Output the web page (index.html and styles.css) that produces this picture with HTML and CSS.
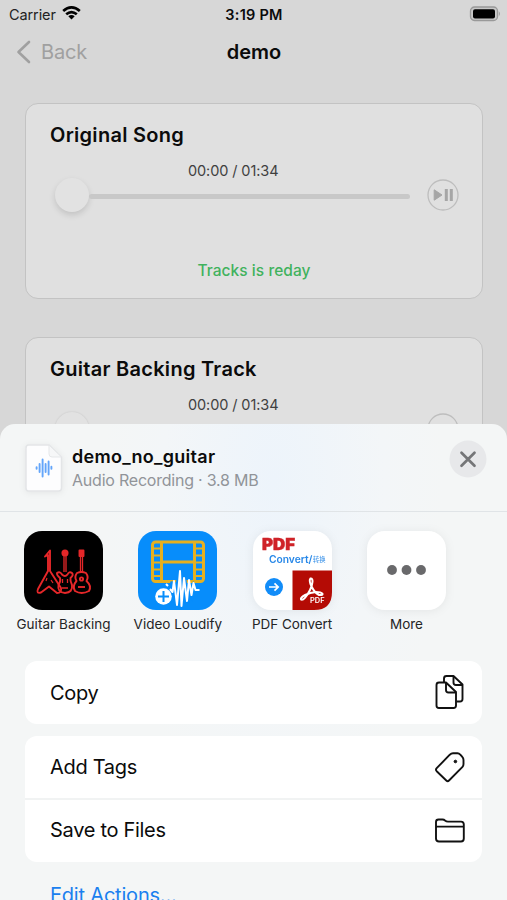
FILE: index.html
```html
<!DOCTYPE html>
<html lang="en">
<head>
<meta charset="utf-8">
<title>demo</title>
<link rel="stylesheet" href="styles.css">
</head>
<body>
<main class="screen">
  <header class="status">
    <div class="carrier"><span class="carrier-name">Carrier</span>
      <svg width="19" height="14" viewBox="0 0 19 14" fill="none" stroke="#000" stroke-width="2.7"><path d="M1.2 5Q9.500-2.200 17.800 5M4.200 8.300Q9.500 3.900 14.800 8.300"/><path d="M9.500 13.500L6.300 10.300Q9.500 7.700 12.700 10.300Z" fill="#000" stroke="none"/></svg>
    </div>
    <span class="time">3:19 PM</span>
    <svg class="battery" width="32" height="16" viewBox="0 0 32 16"><rect x="1.500" y="1" width="27" height="13.500" rx="4" fill="#c8c8c8" stroke="#999" stroke-width="1.300"/><rect x="4" y="3.200" width="22" height="9.200" rx="2" fill="#000"/><path d="M29.800 5.200Q32 7.700 29.800 10.200Z" fill="#999"/></svg>
  </header>
  <nav class="nav">
    <div class="back"><svg width="15" height="24" viewBox="0 0 15 24" fill="none" stroke="#a0a0a0" stroke-width="2.600" stroke-linecap="round" stroke-linejoin="round"><path d="M13 2L2.500 12L13 22"/></svg><span class="back-label">Back</span></div>
    <h1 class="title">demo</h1>
    <span></span>
  </nav>
  <section class="card">
    <h2 class="card-title"><span>Original Song</span></h2>
    <div class="clock">00:00 / 01:34</div>
    <div class="player">
      <div class="slider"><i class="thumb"></i><i class="rail"></i></div>
      <svg class="play" width="32" height="32" viewBox="0 0 32 32"><circle cx="16" cy="16" r="15" fill="none" stroke="#bdbdbd" stroke-width="1.300"/><path d="M7.200 10.800L15 16L7.200 21.200Z" fill="#a6a6a6" stroke="#a6a6a6" stroke-linejoin="round"/><path d="M19.300 10V22M24.300 10V22" stroke="#a6a6a6" stroke-width="3"/></svg>
    </div>
    <p class="ready"><span>Tracks is reday</span></p>
  </section>
  <section class="card">
    <h2 class="card-title"><span>Guitar Backing Track</span></h2>
    <div class="clock">00:00 / 01:34</div>
    <div class="player">
      <div class="slider"><i class="thumb flat"></i><i class="rail"></i></div>
      <svg class="play" width="32" height="32" viewBox="0 0 32 32"><circle cx="16" cy="16" r="15" fill="none" stroke="#bdbdbd" stroke-width="1.300"/></svg>
    </div>
  </section>
</main>
<aside class="sheet">
  <header class="file">
    <svg class="doc" width="40" height="50" viewBox="0 0 40 50"><path d="M4.500 2H25L37.500 14V45Q37.500 48 34.500 48H4.500Q2 48 2 45V5Q2 2 4.500 2Z" fill="#fdfdfe" stroke="#e3e5e7" stroke-width="1.500"/><path d="M25 2V11Q25 14 28 14H37.500Z" fill="#f6f7f8" stroke="#e5e7e9"/><path d="M12.600 24.200v1.500M15.600 21v8M18.600 16.500v17M21.600 21v8M24.600 18.500v13M27.400 23.800v2" stroke="#63a5fa" stroke-width="1.900" stroke-linecap="round"/></svg>
    <div class="file-info"><strong class="file-name">demo_no_guitar</strong><span class="file-meta">Audio Recording · 3.8 MB</span></div>
    <svg class="close" width="38" height="38" viewBox="0 0 38 38"><circle cx="19" cy="19" r="18.500" fill="#e7e8ea"/><path d="M12.500 12.800L25.500 25.800M25.500 12.800L12.500 25.800" stroke="#757678" stroke-width="2.700" stroke-linecap="round"/></svg>
  </header>
  <div class="apps">
    <div class="app">
      <svg class="icon" width="79" height="79" viewBox="0 0 79 79"><rect width="79" height="79" rx="18" fill="#000"/>
        <g fill="none" stroke="#e62729" stroke-width="1.900" stroke-linejoin="round">
          <path d="M24 40V24L21 25.500L26 19.500V40L37 57Q38 62 33 62L25 55.500L17 61.500Q12 63 14 58Z"/><path d="M23 47l-1 3M27 49l2 3" stroke-width="1.200"/>
          <path d="M40 25V41M42 25V41" stroke-width="1.300"/><circle cx="41" cy="22" r="2.600" fill="#e62729"/>
          <path d="M38 43.500Q36 40 33 42Q32.500 44 36 47Q37 50 34.500 54Q33 61.500 41 62Q49 61.500 48 54Q46 50 46.500 47Q50 44 48 42Q45 40 43.500 43.500Q41 46.500 38 43.500Z"/><path d="M38.500 48v4M43.500 48v4M38 57h6" stroke-width="1.300"/>
          <path d="M56.500 25V41M58.500 25V41" stroke-width="1.300"/><path d="M55.500 19.500H59.500V25H55.500Z" fill="#e62729"/>
          <path d="M53 42Q57.500 40 62 42Q65 46 62.500 50Q68 55 65 60Q57.500 64 51 60Q48 55 52.500 50Q50 46 53 42Z"/><circle cx="57.500" cy="48" r="1.600"/><path d="M54 56h7"/>
        </g></svg>
      <span class="n1">Guitar Backing</span>
    </div>
    <div class="app">
      <svg class="icon" width="79" height="79" viewBox="0 0 79 79"><rect width="79" height="79" rx="18" fill="#078dfb"/>
        <g fill="none" stroke="#e5b020" stroke-width="3"><rect x="14.500" y="11" width="51" height="39.500" rx="3"/><path d="M23.500 11V50M56.500 11V50M24 31H56"/><path d="M14 17.500h9M14 24.500h9M14 31.500h9M14 38.500h9M14 45h9M57 17.500h9M57 24.500h9M57 31.500h9M57 38.500h9M57 45h9" stroke-width="2.200"/></g>
        <path d="M30 55L33 57L35 51L38 71L42 40L43.500 74L46 49L49 71L51 55L54 63L56 56L58 59H61" fill="none" stroke="#078dfb" stroke-width="5"/>
        <path d="M28 53L30 55M32 58L34.500 61L36 50L39 74L42 40L43.500 75L46 47L49 70L51 49L53.500 64L55.500 52L57.500 59H61.500" fill="none" stroke="#fff" stroke-width="2" stroke-linejoin="round"/>
        <circle cx="25.500" cy="65.500" r="8.300" fill="#fff"/><path d="M20 65.500h11M25.500 60v11" stroke="#078dfb" stroke-width="2"/></svg>
      <span class="n2">Video Loudify</span>
    </div>
    <div class="app">
      <svg class="icon shadow" width="79" height="79" viewBox="0 0 79 79"><rect width="79" height="79" rx="18" fill="#fff"/>
        <path d="M39.500 39.500H79V61Q79 79 61 79H39.500Z" fill="#b40b05"/>
        <text class="pdf-big" x="9" y="18.700" textLength="33" lengthAdjust="spacingAndGlyphs">PDF</text>
        <text class="convert" x="16" y="31.500" textLength="43.500" lengthAdjust="spacingAndGlyphs">Convert/</text><text class="zhuan" x="60" y="31.300" textLength="12.500" lengthAdjust="spacingAndGlyphs">转换</text>
        <circle cx="21" cy="56" r="9" fill="#118cf8"/><path d="M16 56h9M21.500 52.300l3.700 3.700l-3.700 3.700" fill="none" stroke="#fff" stroke-width="1.700"/>
        <path d="M57.500 47.500C60.500 47 60 53 57 59C54 65 50 70 48 68.500C47 66 55 61.500 63 61C70 61 72 64.500 66 64C60 61 55 50 57.500 47.500Z" fill="none" stroke="#fff" stroke-width="2"/>
        <text class="pdf-small" x="57" y="72" textLength="14.500" lengthAdjust="spacingAndGlyphs">PDF</text></svg>
      <span class="n3">PDF Convert</span>
    </div>
    <div class="app">
      <svg class="icon shadow" width="79" height="79" viewBox="0 0 79 79"><rect width="79" height="79" rx="18" fill="#fff"/><g fill="#69696b"><circle cx="25" cy="39" r="4.900"/><circle cx="39.500" cy="39" r="4.900"/><circle cx="54" cy="39" r="4.900"/></g></svg>
      <span class="n4">More</span>
    </div>
  </div>
  <div class="group">
    <div class="row"><span class="r1">Copy</span>
      <svg width="32" height="36" viewBox="0 0 32 36" fill="none" stroke="#111" stroke-width="1.900" stroke-linejoin="round"><path d="M10 8V4.500Q10 2 12.500 2H19.500L28.500 10.500V25Q28.500 27.500 26 27.500H22.500"/><path d="M19.500 2.500V8.500Q19.500 11 22 11H28"/><path d="M5 8.500H12L22 18V31.500Q22 34 19.500 34H5Q2.500 34 2.500 31.500V11Q2.500 8.500 5 8.500Z"/><path d="M12 9V16Q12 18.500 14.500 18.500H21.500"/></svg></div>
  </div>
  <div class="group">
    <div class="row"><span class="r2">Add Tags</span>
      <svg width="32" height="34" viewBox="0 0 32 34" fill="none" stroke="#111" stroke-width="1.900" stroke-linejoin="round"><path d="M2.700 18.200L15.800 4.700Q17.300 3.300 19 3.300H23.500Q25 3.300 26.300 4.600L28.300 6.900Q29.500 8.200 29.500 10V14Q29.500 15.800 28.500 16.800L15 30.500Q13.700 31.800 12.300 30.500L2.700 21.200Q1.300 19.700 2.700 18.200Z"/><circle cx="21.400" cy="11.500" r="1.300" fill="#111" stroke-width="1"/></svg></div>
    <div class="row"><span class="r3">Save to Files</span>
      <svg width="32" height="28" viewBox="0 0 32 28" fill="none" stroke="#111" stroke-width="1.900" stroke-linejoin="round"><path d="M2 21.500V5Q2 2.500 4.500 2.500H8.500Q10 2.500 11 3.500Q12.300 4.600 14 4.600H27Q29.800 4.600 29.800 7.500V21.500Q29.800 24.500 27 24.500H5Q2 24.500 2 21.500ZM2 9.600H30"/></svg></div>
  </div>
  <div class="edit"><span>Edit Actions...</span></div>
</aside>
</body>
</html>
```
FILE: styles.css
```css
* { box-sizing: border-box; margin: 0; padding: 0; }
body { width: 507px; height: 900px; overflow: hidden; background: #d7d7d7; color: #0b0b0b; font-family: Inter, "Liberation Sans", sans-serif; display: grid; }
.screen, .sheet { grid-area: 1 / 1; }
svg { display: block; flex: none; }
span, strong { white-space: nowrap; }
.status { height: 28px; display: grid; grid-template-columns: 1fr auto 1fr; align-items: center; padding: 0 6px 0 9px; }
.carrier { display: flex; gap: 6px; align-items: center; font-size: 14.5px; letter-spacing: -.1px; color: #222; }
.carrier svg { margin-top: -2px; }
.time { font-size: 14.5px; letter-spacing: .25px; font-weight: 600; margin-left: -2px; }
.battery { justify-self: end; margin-top: -1px; }
.nav { height: 48px; display: grid; grid-template-columns: 1fr auto 1fr; align-items: center; padding: 0 16px; }
.back { display: flex; align-items: center; gap: 10px; font-size: 20px; letter-spacing: -.15px; color: #a0a0a0; }
.title { font-size: 20px; font-weight: 600; letter-spacing: .05px; padding-left: 1px; }
.card { margin: 27px 24px 38px 25px; height: 196px; border: 1.5px solid #c3c3c3; border-radius: 13px; background: #e0e0e0; padding: 18px 24px; }
.card + .card { margin-top: 0; }
.card-title { font-size: 20px; line-height: 26px; font-weight: 600; letter-spacing: .28px; }
.clock { margin: 13px 0 0 138px; font-size: 14.5px; line-height: 20px; letter-spacing: -.1px; color: #3f3f3f; white-space: nowrap; }
.player { display: flex; align-items: center; justify-content: space-between; height: 30px; margin-top: -1px; }
.slider { display: flex; align-items: center; width: 360px; padding-left: 5px; }
.thumb { width: 34px; height: 34px; border-radius: 50%; background: #e2e2e2; box-shadow: 0 3px 6px #0002; }
.flat { box-shadow: 0 0 2px #0002; }
.rail { flex: 1; height: 5px; border-radius: 3px; background: #c8c8c8; margin-top: 2px; }
.play { margin-right: -1px; }
.ready { margin-top: 50px; text-align: center; font-size: 15.5px; line-height: 22px; font-weight: 500; letter-spacing: .06px; color: #41b25d; }
.sheet { z-index: 1; margin-top: 424px; height: 476px; border-radius: 15px 15px 0 0; background: radial-gradient(ellipse 170px 340px at 54% 12%, #edf4fb, #f3f6f8 65%, #f4f6f6); overflow: hidden; }
.file { height: 88px; display: flex; align-items: center; padding: 0 20px 0 24px; border-bottom: 1.5px solid #e0e4e7; }
.doc { filter: drop-shadow(0 1px 3px #0001); }
.file-info { flex: 1; display: flex; flex-direction: column; padding-left: 8px; margin-top: 1px; }
.file-name { font-size: 18px; line-height: 24px; font-weight: 600; letter-spacing: .28px; }
.file-meta { font-size: 16px; line-height: 23px; letter-spacing: -.22px; color: #919499; }
.close { margin-top: -18px; }
.apps { display: flex; gap: 35.3px; padding: 19px 0 0 24px; height: 149px; }
.app { width: 79px; display: flex; flex-direction: column; align-items: center; gap: 4.5px; font-size: 13.5px; line-height: 19px; color: #242526; }
.n1 { letter-spacing: .06px; }
.n3 { letter-spacing: -.05px; }
.n4 { letter-spacing: -.1px; }
.shadow { filter: drop-shadow(0 1px 5px #0001); }
.pdf-big { font: 900 15.5px Inter, sans-serif; fill: #cf2228; stroke: #cf2228; stroke-width: .5; }
.convert { font: 600 10px Inter, sans-serif; fill: #2687e8; }
.zhuan { font: 500 6.5px "Noto Sans CJK SC", sans-serif; fill: #4c9ceb; }
.pdf-small { font: 600 7px Inter, sans-serif; fill: #fff; }
.group { margin: 0 25px 12px; border-radius: 12px; background: #fff; overflow: hidden; }
.row { height: 62.5px; padding: 0 16px 0 25px; display: flex; align-items: center; justify-content: space-between; font-size: 20px; }
.row + .row { border-top: 2px solid #f1f3f3; height: 63.5px; }
.r1, .r2, .r3 { letter-spacing: -.3px; }
.r1 { padding-top: 1px; }
.r3 { margin-top: -1px; }
.edit { padding: 8px 50px; font-size: 20px; line-height: 26px; letter-spacing: -.2px; color: #1a80ef; }
```
